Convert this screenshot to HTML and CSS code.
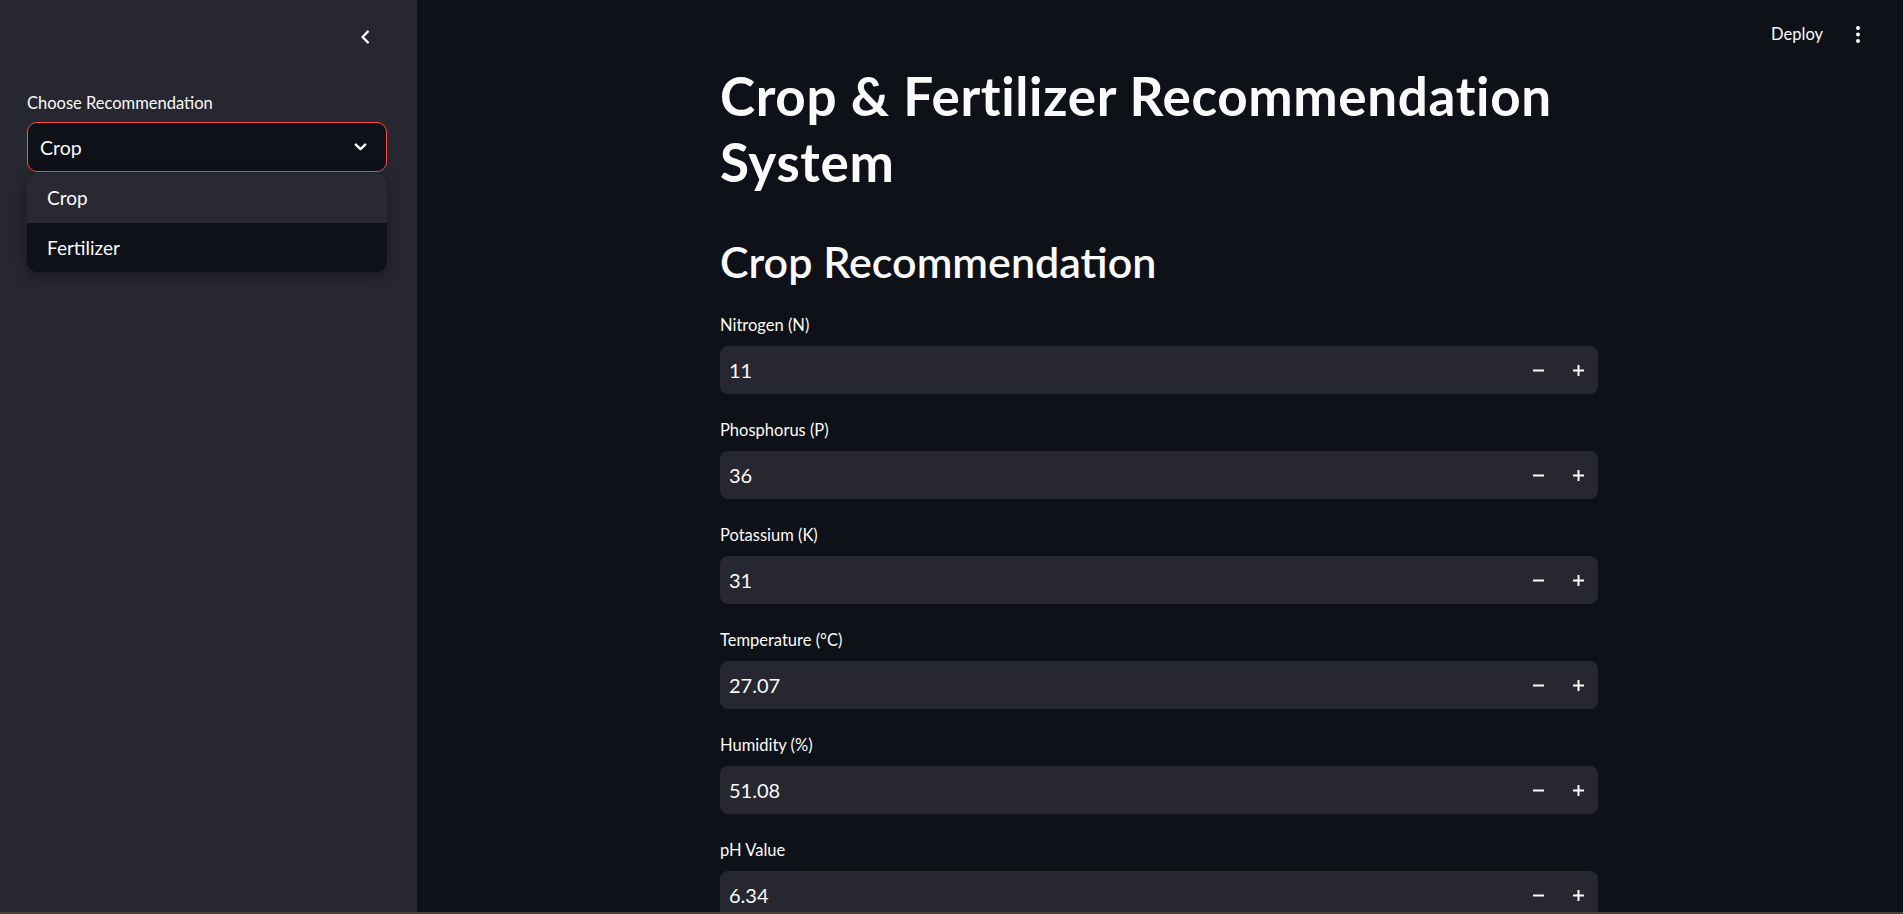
FILE: index.html
```html
<!DOCTYPE html>
<html lang="en">
<head>
<meta charset="utf-8">
<title>Crop &amp; Fertilizer Recommendation System</title>
<link rel="stylesheet" href="styles.css">
</head>
<body>
<div class="app">
  <aside class="sidebar">
    <div class="sidebar-head">
      <button class="collapse" aria-label="Collapse sidebar">
        <svg width="10" height="14" viewBox="0 0 10 14"><path d="M7.8 1.6 L2.6 7 L7.8 12.4" fill="none" stroke="#fafafa" stroke-width="2.4" stroke-linecap="round" stroke-linejoin="round"/></svg>
      </button>
    </div>
    <div class="field-label side-label">Choose Recommendation</div>
    <div class="select">
      <span>Crop</span>
      <svg width="13" height="8" viewBox="0 0 13 8"><path d="M1.8 1.6 L6.5 6.2 L11.2 1.6" fill="none" stroke="#fafafa" stroke-width="2.4" stroke-linecap="round" stroke-linejoin="round"/></svg>
    </div>
    <ul class="menu">
      <li class="option active">Crop</li>
      <li class="option">Fertilizer</li>
    </ul>
  </aside>
  <main class="main">
    <div class="topbar">
      <span class="deploy">Deploy</span>
      <svg class="kebab" width="4" height="17" viewBox="0 0 4 17"><circle cx="2" cy="2" r="2" fill="#fafafa"/><circle cx="2" cy="8.5" r="2" fill="#fafafa"/><circle cx="2" cy="15" r="2" fill="#fafafa"/></svg>
    </div>
    <div class="block">
      <h1>Crop &amp; Fertilizer Recommendation System</h1>
      <h2>Crop Recommendation</h2>
      <div class="fields">
        <div class="field">
          <div class="field-label">Nitrogen (N)</div>
          <div class="number"><span class="value">11</span><span class="step"><svg width="11" height="11" viewBox="0 0 11 11"><rect x="0" y="4.5" width="11" height="2" fill="#fafafa"/></svg></span><span class="step"><svg width="11" height="11" viewBox="0 0 11 11"><rect x="0" y="4.5" width="11" height="2" fill="#fafafa"/><rect x="4.5" y="0" width="2" height="11" fill="#fafafa"/></svg></span></div>
        </div>
        <div class="field">
          <div class="field-label">Phosphorus (P)</div>
          <div class="number"><span class="value">36</span><span class="step"><svg width="11" height="11" viewBox="0 0 11 11"><rect x="0" y="4.5" width="11" height="2" fill="#fafafa"/></svg></span><span class="step"><svg width="11" height="11" viewBox="0 0 11 11"><rect x="0" y="4.5" width="11" height="2" fill="#fafafa"/><rect x="4.5" y="0" width="2" height="11" fill="#fafafa"/></svg></span></div>
        </div>
        <div class="field">
          <div class="field-label">Potassium (K)</div>
          <div class="number"><span class="value">31</span><span class="step"><svg width="11" height="11" viewBox="0 0 11 11"><rect x="0" y="4.5" width="11" height="2" fill="#fafafa"/></svg></span><span class="step"><svg width="11" height="11" viewBox="0 0 11 11"><rect x="0" y="4.5" width="11" height="2" fill="#fafafa"/><rect x="4.5" y="0" width="2" height="11" fill="#fafafa"/></svg></span></div>
        </div>
        <div class="field">
          <div class="field-label">Temperature (°C)</div>
          <div class="number"><span class="value">27.07</span><span class="step"><svg width="11" height="11" viewBox="0 0 11 11"><rect x="0" y="4.5" width="11" height="2" fill="#fafafa"/></svg></span><span class="step"><svg width="11" height="11" viewBox="0 0 11 11"><rect x="0" y="4.5" width="11" height="2" fill="#fafafa"/><rect x="4.5" y="0" width="2" height="11" fill="#fafafa"/></svg></span></div>
        </div>
        <div class="field">
          <div class="field-label">Humidity (%)</div>
          <div class="number"><span class="value">51.08</span><span class="step"><svg width="11" height="11" viewBox="0 0 11 11"><rect x="0" y="4.5" width="11" height="2" fill="#fafafa"/></svg></span><span class="step"><svg width="11" height="11" viewBox="0 0 11 11"><rect x="0" y="4.5" width="11" height="2" fill="#fafafa"/><rect x="4.5" y="0" width="2" height="11" fill="#fafafa"/></svg></span></div>
        </div>
        <div class="field">
          <div class="field-label">pH Value</div>
          <div class="number"><span class="value">6.34</span><span class="step"><svg width="11" height="11" viewBox="0 0 11 11"><rect x="0" y="4.5" width="11" height="2" fill="#fafafa"/></svg></span><span class="step"><svg width="11" height="11" viewBox="0 0 11 11"><rect x="0" y="4.5" width="11" height="2" fill="#fafafa"/><rect x="4.5" y="0" width="2" height="11" fill="#fafafa"/></svg></span></div>
        </div>
      </div>
    </div>
  </main>
</div>
<div class="strip"></div>
</body>
</html>
```
FILE: styles.css
```css
* { box-sizing: border-box; margin: 0; padding: 0; }
html, body { height: 100%; }
body {
  font-family: "Lato", "Noto Sans", sans-serif;
  background: #0e1117;
  color: #fafafa;
  overflow: hidden;
}
.app { display: flex; height: 914px; }

.sidebar {
  width: 417px;
  flex: none;
  background: #262730;
  padding: 21px 30px 0 27px;
  position: relative;
}
.sidebar-head { display: flex; justify-content: flex-end; padding-right: 6px; height: 32px; }
.collapse {
  width: 32px; height: 32px;
  display: flex; align-items: center; justify-content: center;
  background: none; border: 0;
}
.field-label {
  font-size: 16.5px;
  line-height: 32px;
  height: 32px;
  margin-bottom: 5px;
  color: #fafafa;
}
.side-label { margin-top: 34px; margin-bottom: 3px; }
.select {
  height: 50px;
  border: 1px solid #ff4b4b;
  border-radius: 10px;
  background: #0e1117;
  display: flex;
  align-items: center;
  justify-content: space-between;
  padding: 0 19px 0 12px;
  font-size: 19.5px;
}
.menu {
  list-style: none;
  position: absolute;
  left: 27px;
  top: 173px;
  width: 360px;
  background: #0e1117;
  border-radius: 10px;
  overflow: hidden;
  box-shadow: 0 4px 16px rgba(0, 0, 0, 0.35);
}
.option {
  height: 49.5px;
  display: flex;
  align-items: center;
  padding-left: 20px;
  font-size: 19px;
}
.option.active { background: #282932; }

.main { flex: 1; position: relative; padding-right: 2px; }
.topbar {
  position: absolute;
  top: 0; right: 0;
  height: 68px;
  display: flex;
  align-items: center;
  gap: 33px;
  padding-right: 43px;
}
.deploy { font-size: 16.5px; }
.block {
  max-width: 918px;
  margin: 0 auto;
  padding: 63px 20px 0;
}
h1 { font-size: 53px; line-height: 66px; font-weight: 700; letter-spacing: 0.65px; }
h2 { font-size: 43px; line-height: 54px; font-weight: 600; margin-top: 40px; }
.fields { display: flex; flex-direction: column; gap: 20px; margin-top: 20px; }
.number {
  height: 48px;
  display: flex;
  align-items: center;
  background: #262730;
  border-radius: 8px;
}
.value { flex: 1; padding-left: 9px; font-size: 20px; }
.step {
  width: 40px; height: 48px;
  display: flex; align-items: center; justify-content: center;
}
.strip {
  position: fixed;
  left: 0; right: 0; bottom: 0;
  height: 2px;
  background: #3f403d;
}
```
